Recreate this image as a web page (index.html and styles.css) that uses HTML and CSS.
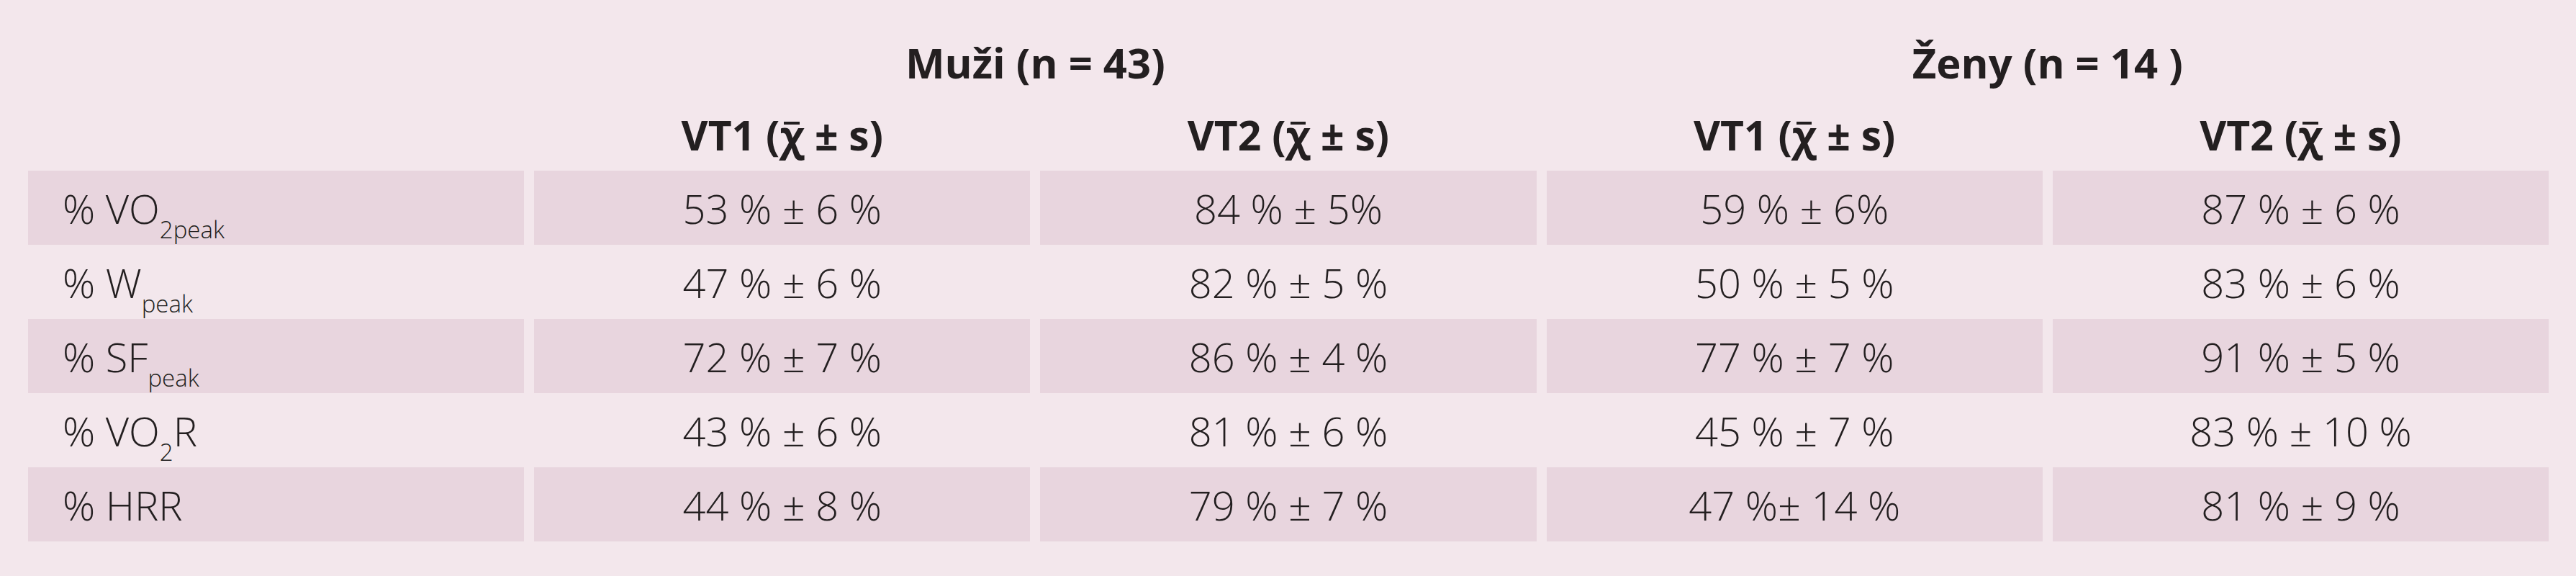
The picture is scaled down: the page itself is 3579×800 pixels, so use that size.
FILE: index.html
```html
<!DOCTYPE html>
<html lang="cs">
<head>
<meta charset="utf-8">
<title>VT1 a VT2</title>
<link rel="stylesheet" href="styles.css">
</head>
<body>
<div class="table">
  <div class="corner"></div>
  <div class="group"><span>Muži (n = 43)</span></div>
  <div class="group"><span>Ženy (n = 14 )</span></div>

  <div class="corner"></div>
  <div class="head"><span>VT1 (<span class="xbar">χ</span> ± s)</span></div>
  <div class="head"><span>VT2 (<span class="xbar">χ</span> ± s)</span></div>
  <div class="head"><span>VT1 (<span class="xbar">χ</span> ± s)</span></div>
  <div class="head"><span>VT2 (<span class="xbar">χ</span> ± s)</span></div>

  <div class="label shade"><span>% VO<sub>2peak</sub></span></div>
  <div class="val shade"><span>53 % ± 6 %</span></div>
  <div class="val shade"><span>84 % ± 5%</span></div>
  <div class="val shade"><span>59 % ± 6%</span></div>
  <div class="val shade"><span>87 % ± 6 %</span></div>

  <div class="label"><span>% W<sub>peak</sub></span></div>
  <div class="val"><span>47 % ± 6 %</span></div>
  <div class="val"><span>82 % ± 5 %</span></div>
  <div class="val"><span>50 % ± 5 %</span></div>
  <div class="val"><span>83 % ± 6 %</span></div>

  <div class="label shade"><span>% SF<sub>peak</sub></span></div>
  <div class="val shade"><span>72 % ± 7 %</span></div>
  <div class="val shade"><span>86 % ± 4 %</span></div>
  <div class="val shade"><span>77 % ± 7 %</span></div>
  <div class="val shade"><span>91 % ± 5 %</span></div>

  <div class="label"><span>% VO<sub>2</sub>R</span></div>
  <div class="val"><span>43 % ± 6 %</span></div>
  <div class="val"><span>81 % ± 6 %</span></div>
  <div class="val"><span>45 % ± 7 %</span></div>
  <div class="val"><span>83 % ± 10 %</span></div>

  <div class="label shade"><span>% HRR</span></div>
  <div class="val shade"><span>44 % ± 8 %</span></div>
  <div class="val shade"><span>79 % ± 7 %</span></div>
  <div class="val shade"><span>47 %± 14 %</span></div>
  <div class="val shade"><span>81 % ± 9 %</span></div>
</div>
</body>
</html>
```
FILE: styles.css
```css
html, body {
  margin: 0;
  padding: 0;
  background: #f3e7ec;
}

body {
  width: 3579px;
  height: 800px;
  font-family: "Open Sans", "Liberation Sans", sans-serif;
  color: #231f20;
}

.table {
  display: grid;
  grid-template-columns: repeat(5, 1fr);
  grid-template-rows: 137px 100px repeat(5, 103px);
  column-gap: 14px;
  padding: 0 38px 0 39px;
}

.corner {
  grid-column: 1;
}

.group {
  grid-column: span 2;
  display: flex;
  align-items: center;
  justify-content: center;
  padding-top: 36px;
  font-size: 58px;
  font-weight: 700;
}

.head {
  display: flex;
  align-items: center;
  justify-content: center;
  font-size: 57px;
  font-weight: 700;
}

.xbar {
  position: relative;
  display: inline-block;
  line-height: 1;
}

.xbar::before {
  content: "";
  position: absolute;
  left: 18%;
  right: 18%;
  top: 0.17em;
  height: 0.07em;
  background: currentColor;
}

.val, .label {
  display: flex;
  align-items: center;
  font-size: 56px;
  font-weight: 300;
}

.val {
  justify-content: center;
}

.label {
  justify-content: flex-start;
  padding-left: 48px;
}

.shade {
  background: #e8d5de;
}

sub {
  font-size: 33px;
  vertical-align: -20px;
  line-height: 0;
}
```
